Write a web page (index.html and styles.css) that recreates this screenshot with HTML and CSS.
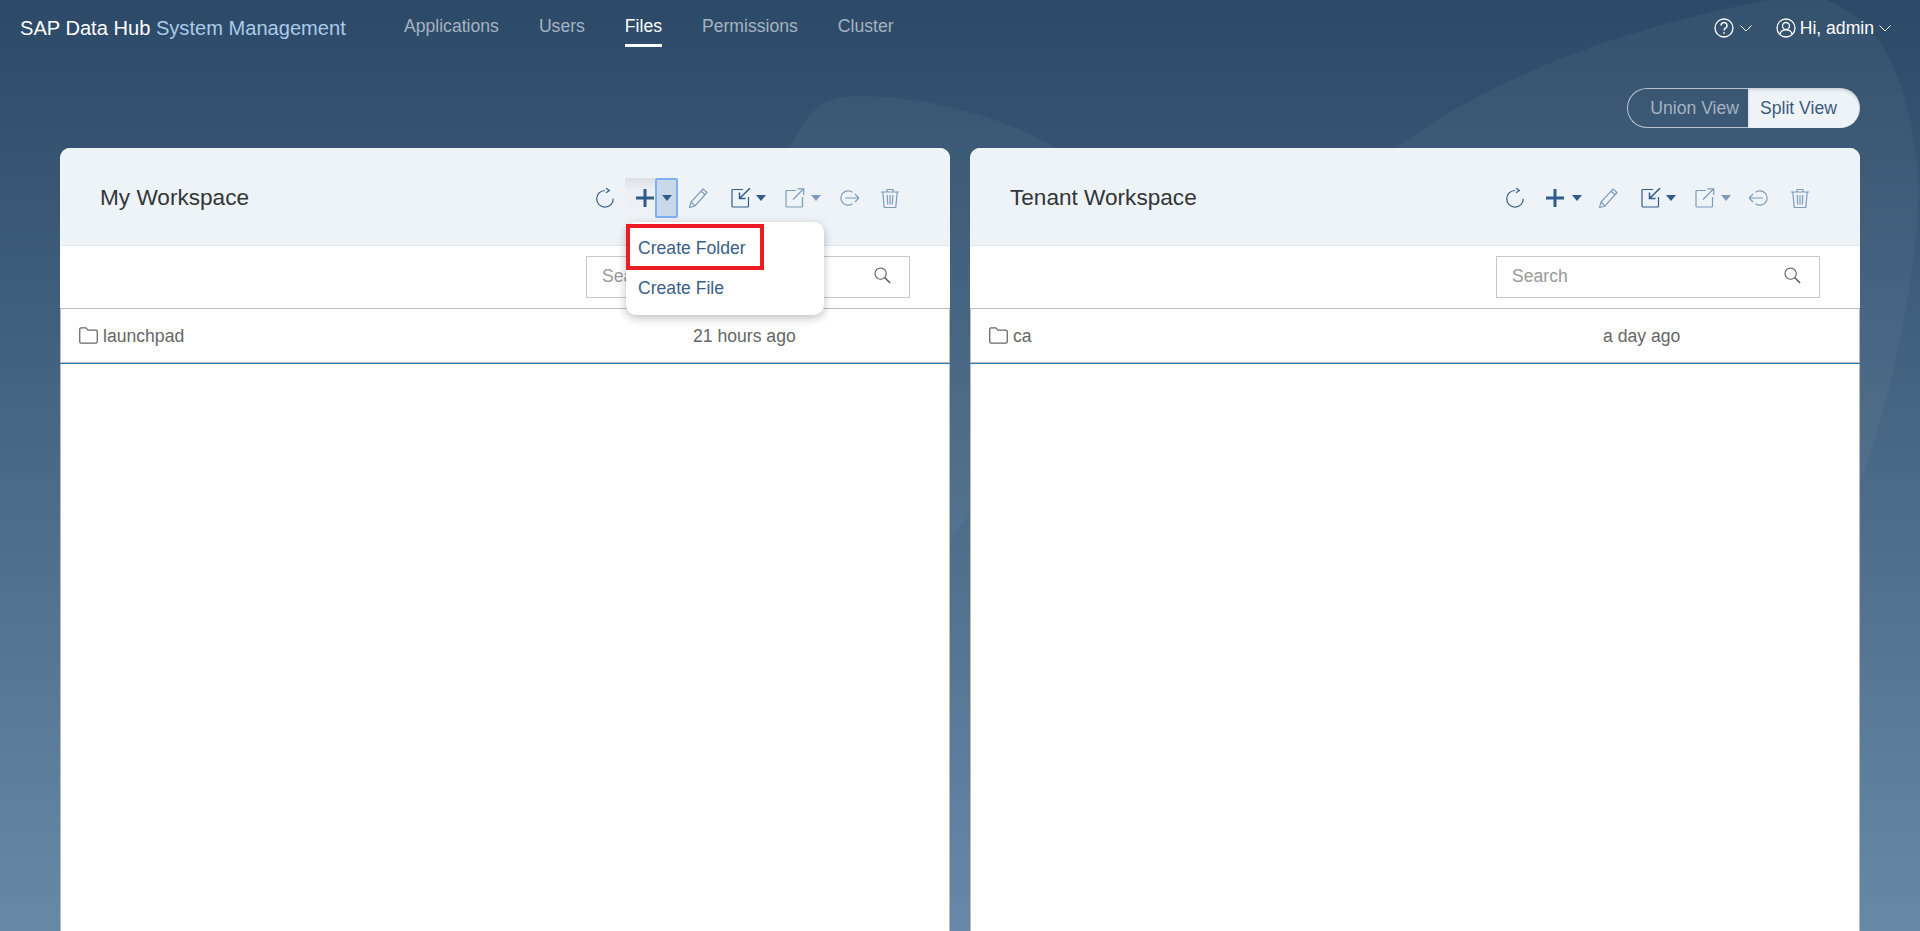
FILE: index.html
```html
<!DOCTYPE html>
<html lang="en">
<head>
    <meta charset="UTF-8">
    <meta name="viewport" content="width=device-width, initial-scale=1.0">
    <title>SAP Data Hub System Management</title>
    <link rel="stylesheet" href="styles.css">
</head>
<body>
    <!-- icon set, reused through <use> -->
    <svg class="icon-defs" aria-hidden="true">
        <symbol id="i-refresh" viewBox="0 0 20 20"><path d="M10 2.500a8.300 8.300 0 1 0 8.300 8.300"/><path d="M11 .2l3.400 2.300L11 4.800"/></symbol>
        <symbol id="i-plus" viewBox="0 0 20 20"><path class="thick" d="M10 1v18M1 10h18"/></symbol>
        <symbol id="i-pencil" viewBox="0 0 20 20"><path d="M15 1l4 3.500L7 18l-5.500 1.500L3 14zM13 3.200l4 3.500M3 14l4 4"/></symbol>
        <symbol id="i-import" viewBox="0 0 20 20"><path d="M12 1.500H2a1 1 0 0 0-1 1V18a1 1 0 0 0 1 1h14.500a1 1 0 0 0 1-1V9"/><path class="mid" d="M19 .2L8.500 10.500M8.500 4.500v6h6"/></symbol>
        <symbol id="i-export" viewBox="0 0 20 20"><path d="M11 2.500H2a1 1 0 0 0-1 1V18a1 1 0 0 0 1 1h14.500a1 1 0 0 0 1-1V9"/><path d="M8 11.500L18.500 1M12.500 .8h6.200v6.200"/></symbol>
        <symbol id="i-share" viewBox="0 0 20 20"><path d="M13.500 4.300a7.200 7.200 0 1 0 0 11.400"/><path d="M6 10h14M16 6l4 4-4 4"/></symbol>
        <symbol id="i-trash" viewBox="0 0 20 20"><path d="M1 4h18M7 4V1.500h6V4M2.800 4l1.400 15.500h11.600L17.200 4M7.200 7l.5 9.500M10 7v9.500M12.800 7l-.5 9.500"/></symbol>
        <symbol id="i-caret" viewBox="0 0 10 6"><path class="solid" d="M0 0h10L5 6z"/></symbol>
        <symbol id="i-search" viewBox="0 0 18 18"><circle cx="7" cy="7" r="6"/><path class="mid" d="M11.500 11.500l5.500 5.500"/></symbol>
        <symbol id="i-folder" viewBox="0 0 18 16"><path d="M.7 14V2A1.300 1.300 0 0 1 2 .7h4.500L8.500 3H16A1.300 1.300 0 0 1 17.300 4.300V14A1.300 1.300 0 0 1 16 15.300H2A1.300 1.300 0 0 1 .7 14z"/></symbol>
        <symbol id="i-chevron" viewBox="0 0 12 7"><path d="M.5 .5L6 6l5.500-5.500"/></symbol>
        <symbol id="i-help" viewBox="0 0 20 20"><circle cx="10" cy="10" r="9"/><path class="mid" d="M7 7.500a3 3 0 1 1 4.500 2.600c-1 .6-1.500 1.200-1.500 2.400"/><path class="mid" d="M10 14.300v1.500"/></symbol>
        <symbol id="i-user" viewBox="0 0 20 20"><circle cx="10" cy="10" r="9"/><circle cx="10" cy="8" r="3.500"/><path d="M3.800 16.500c.6-3 3-4.700 6.200-4.700s5.600 1.700 6.200 4.700"/></symbol>
    </svg>

    <!-- background swooshes, leaf shapes that close behind the panels -->
    <svg class="swoosh" viewBox="0 0 1920 931" aria-hidden="true">
        <path d="M790 148C805 115 820 96 856 96C925 96 1000 115 1056 148C1100 300 1000 500 900 600C800 500 770 300 790 148z"/>
        <path d="M1396 148C1500 70 1640 25 1767 0L1827 0C1880 20 1913 80 1919 193C1915 290 1890 400 1860 483L1500 600C1400 400 1380 250 1396 148z"/>
    </svg>

    <div class="page">
        <header class="topbar">
            <div class="brand">SAP Data Hub <span class="brand-sub">System Management</span></div>
            <nav class="nav">
                <a class="nav-item">Applications</a>
                <a class="nav-item">Users</a>
                <a class="nav-item active">Files</a>
                <a class="nav-item">Permissions</a>
                <a class="nav-item">Cluster</a>
            </nav>
            <div class="top-actions">
                <span class="top-action help">
                    <svg class="ic-top"><use href="#i-help"/></svg>
                    <svg class="ic-chev"><use href="#i-chevron"/></svg>
                </span>
                <span class="top-action user">
                    <svg class="ic-top"><use href="#i-user"/></svg>
                    Hi, admin
                    <svg class="ic-chev"><use href="#i-chevron"/></svg>
                </span>
            </div>
        </header>

        <div class="view-row">
            <div class="view-switch">
                <span class="view-opt">Union View</span>
                <span class="view-opt selected">Split View</span>
            </div>
        </div>

        <main class="panels">
            <section class="panel">
                <div class="panel-head">
                    <h2>My Workspace</h2>
                    <div class="toolbar">
                        <button class="tool"><svg class="ic"><use href="#i-refresh"/></svg></button>
                        <div class="add-group">
                            <button class="tool-plus hovered"><svg class="ic"><use href="#i-plus"/></svg></button>
                            <button class="tool-caret pressed"><svg class="caret"><use href="#i-caret"/></svg></button>
                            <div class="menu">
                                <div class="menu-item">Create Folder</div>
                                <div class="menu-item">Create File</div>
                                <div class="callout"></div>
                            </div>
                        </div>
                        <button class="tool"><svg class="ic muted"><use href="#i-pencil"/></svg></button>
                        <button class="tool-drop import"><svg class="ic"><use href="#i-import"/></svg><svg class="caret"><use href="#i-caret"/></svg></button>
                        <button class="tool-drop export muted"><svg class="ic"><use href="#i-export"/></svg><svg class="caret"><use href="#i-caret"/></svg></button>
                        <button class="tool share"><svg class="ic muted"><use href="#i-share"/></svg></button>
                        <button class="tool"><svg class="ic muted"><use href="#i-trash"/></svg></button>
                    </div>
                </div>
                <div class="search-row">
                    <label class="search">
                        <input type="text" placeholder="Search">
                        <svg class="ic-search"><use href="#i-search"/></svg>
                    </label>
                </div>
                <div class="file-list">
                    <div class="file-row">
                        <span class="file-name"><svg class="ic-folder"><use href="#i-folder"/></svg>launchpad</span>
                        <span class="file-date">21 hours ago</span>
                    </div>
                </div>
            </section>

            <section class="panel">
                <div class="panel-head">
                    <h2>Tenant Workspace</h2>
                    <div class="toolbar">
                        <button class="tool"><svg class="ic"><use href="#i-refresh"/></svg></button>
                        <div class="add-group">
                            <button class="tool-plus"><svg class="ic"><use href="#i-plus"/></svg></button>
                            <button class="tool-caret"><svg class="caret"><use href="#i-caret"/></svg></button>
                        </div>
                        <button class="tool"><svg class="ic muted"><use href="#i-pencil"/></svg></button>
                        <button class="tool-drop import"><svg class="ic"><use href="#i-import"/></svg><svg class="caret"><use href="#i-caret"/></svg></button>
                        <button class="tool-drop export muted"><svg class="ic"><use href="#i-export"/></svg><svg class="caret"><use href="#i-caret"/></svg></button>
                        <button class="tool share flip"><svg class="ic muted"><use href="#i-share"/></svg></button>
                        <button class="tool"><svg class="ic muted"><use href="#i-trash"/></svg></button>
                    </div>
                </div>
                <div class="search-row">
                    <label class="search">
                        <input type="text" placeholder="Search">
                        <svg class="ic-search"><use href="#i-search"/></svg>
                    </label>
                </div>
                <div class="file-list">
                    <div class="file-row">
                        <span class="file-name"><svg class="ic-folder"><use href="#i-folder"/></svg>ca</span>
                        <span class="file-date">a day ago</span>
                    </div>
                </div>
            </section>
        </main>
    </div>
</body>
</html>
```

FILE: styles.css
```css
* {
    box-sizing: border-box;
}
html, body {
    height: 100%;
}
body {
    margin: 0;
    overflow: hidden;
    font-family: "Liberation Sans", Arial, sans-serif;
    background: linear-gradient(180deg, #2c4a68 0%, #6788a6 100%);
    position: relative;
}
.icon-defs {
    position: absolute;
    width: 0;
    height: 0;
}
.swoosh {
    position: absolute;
    top: 0;
    left: 0;
    width: 100%;
    height: 100%;
}
.swoosh path {
    fill: rgba(255, 255, 255, 0.04);
}
.page {
    position: relative;
    height: 100%;
    display: flex;
    flex-direction: column;
}

/* top bar */
.topbar {
    height: 48px;
    padding: 0 29px 0 20px;
    display: flex;
    align-items: flex-start;
}
.brand {
    color: #fff;
    font-size: 20.100px;
    line-height: 23px;
    margin-top: 17px;
    width: 384px;
    white-space: nowrap;
}
.brand-sub {
    color: #a9cbe9;
}
.nav {
    display: flex;
    gap: 40px;
}
.nav-item {
    display: block;
    height: 47px;
    padding-top: 16px;
    font-size: 17.600px;
    line-height: 20px;
    color: #a5b3c1;
}
.nav-item.active {
    color: #fff;
    border-bottom: 3px solid #fff;
}
.top-actions {
    margin-left: auto;
    display: flex;
    color: #fff;
    font-size: 17.600px;
    line-height: 22px;
    margin-top: 17px;
    gap: 24px;
}
.top-action {
    display: flex;
    align-items: center;
}
.ic-top {
    width: 20px;
    height: 20px;
    fill: none;
    stroke: #fff;
    stroke-width: 1.300;
}
.ic-chev {
    width: 12px;
    height: 7px;
    fill: none;
    stroke: #fff;
    stroke-width: 1;
}
.help .ic-chev {
    margin-left: 6px;
}
.user .ic-top {
    margin-right: 4px;
}
.user .ic-chev {
    margin-left: 5px;
}

/* union / split */
.view-row {
    height: 100px;
    flex: none;
    padding: 40px 60px 20px 0;
    display: flex;
    justify-content: flex-end;
}
.view-switch {
    width: 233px;
    height: 40px;
    display: flex;
    font-size: 17.600px;
}
.view-opt {
    display: flex;
    align-items: center;
    justify-content: flex-end;
    width: 121px;
    padding-right: 9px;
    color: #a5b3c1;
    border: 1px solid #b6c2ce;
    border-right: 0;
    border-radius: 20px 0 0 20px;
}
.view-opt.selected {
    width: 112px;
    padding: 0 0 0 12px;
    justify-content: flex-start;
    color: #3d5a7c;
    background: #eef3f8;
    border: 0;
    border-radius: 0 20px 20px 0;
    box-shadow: inset 0 2px 3px rgba(0, 0, 0, 0.15);
}

/* workspaces */
.panels {
    flex: 1;
    min-height: 0;
    padding: 0 60px;
    display: grid;
    grid-template-columns: 1fr 1fr;
    gap: 20px;
}
.panel {
    background: #fff;
    border-radius: 10px 10px 0 0;
    display: flex;
    flex-direction: column;
    min-height: 0;
    position: relative;
}
.panel-head {
    height: 98px;
    flex: none;
    padding: 2px 40px 0;
    background: #eef3f8;
    border-bottom: 1px solid #dfe7ef;
    border-radius: 10px 10px 0 0;
    display: flex;
    align-items: center;
    justify-content: space-between;
}
.panel-head h2 {
    margin: 0;
    font-size: 22.600px;
    font-weight: normal;
    color: #32363a;
}
.toolbar {
    display: flex;
    align-items: center;
    height: 40px;
}
.toolbar button {
    height: 40px;
    padding: 0;
    border: 0;
    background: none;
    display: flex;
    align-items: center;
    justify-content: center;
    color: #2f5c8a;
}
.ic {
    width: 20px;
    height: 20px;
    fill: none;
    stroke: currentColor;
    stroke-width: 1.200;
    overflow: visible;
}
.thick {
    stroke-width: 3;
}
.muted, .toolbar .muted {
    color: #7d9cbc;
}
.mid {
    stroke-width: 1.500;
}
.solid {
    fill: currentColor;
    stroke: none;
}
.caret {
    width: 10px;
    height: 6px;
}
.tool {
    width: 40px;
}
.toolbar .share {
    width: 42px;
}
.flip .ic {
    transform: scaleX(-1);
}
.add-group {
    position: relative;
    display: flex;
}
.toolbar .tool-plus {
    width: 30px;
    justify-content: flex-end;
}
.toolbar .tool-caret {
    width: 23px;
}
.toolbar .tool-plus.hovered {
    background: linear-gradient(180deg, #dcdfe3 0%, #eceff3 30%, #eef3f8 100%);
}
.toolbar .tool-caret.pressed {
    background: #c9d9e8;
    border: 2px solid #7cb0f5;
    border-radius: 2px;
}
.toolbar .tool-drop {
    justify-content: flex-start;
}
.toolbar .import {
    width: 56px;
    padding-left: 13px;
}
.toolbar .import .caret {
    margin-left: 5px;
}
.toolbar .export {
    width: 54px;
    padding-left: 11px;
}
.toolbar .export .caret {
    margin-left: 6px;
}

/* add menu, with the red callout on top of it */
.menu {
    position: absolute;
    top: 44px;
    left: 1px;
    width: 198px;
    height: 93px;
    padding-top: 6px;
    background: #fff;
    border-radius: 10px;
    box-shadow: 0 3px 10px rgba(0, 0, 0, 0.25);
    z-index: 5;
}
.menu-item {
    height: 40px;
    line-height: 40px;
    padding-left: 12px;
    font-size: 17.600px;
    color: #3b6089;
}
.callout {
    position: absolute;
    top: 2px;
    left: 0;
    width: 138px;
    height: 46px;
    border: 4px solid #ed1c24;
}

.search-row {
    height: 62px;
    flex: none;
    padding: 10px 40px 0 0;
    display: flex;
    justify-content: flex-end;
}
.search {
    position: relative;
    display: block;
    width: 324px;
    height: 42px;
}
.search input {
    width: 100%;
    height: 100%;
    padding: 0 40px 2px 15px;
    border: 1px solid #c8c8c8;
    outline: none;
    font-family: inherit;
    font-size: 17.600px;
    color: #333;
}
.search input::placeholder {
    color: #999;
    opacity: 1;
}
.ic-search {
    position: absolute;
    top: 11px;
    right: 19px;
    width: 17px;
    height: 17px;
    fill: none;
    stroke: #555;
    stroke-width: 1.100;
}
.file-list {
    flex: 1;
    border-top: 1px solid #bbb;
    border-left: 1px solid #bbb;
    border-right: 1px solid #bbb;
}
.file-row {
    height: 54px;
    margin: 0 -1px;
    padding: 2px 0 0 1px;
    display: flex;
    align-items: center;
    border-bottom: 1px solid #bbb;
    box-shadow: 0 1px 0 #2b7fb0;
    font-size: 17.600px;
    color: #666;
}
.file-name {
    width: 632px;
    padding-left: 18px;
    display: flex;
    align-items: center;
}
.ic-folder {
    width: 19px;
    height: 17px;
    margin-right: 5px;
    margin-top: -3px;
    fill: none;
    stroke: #666;
    stroke-width: 1.200;
}
```
